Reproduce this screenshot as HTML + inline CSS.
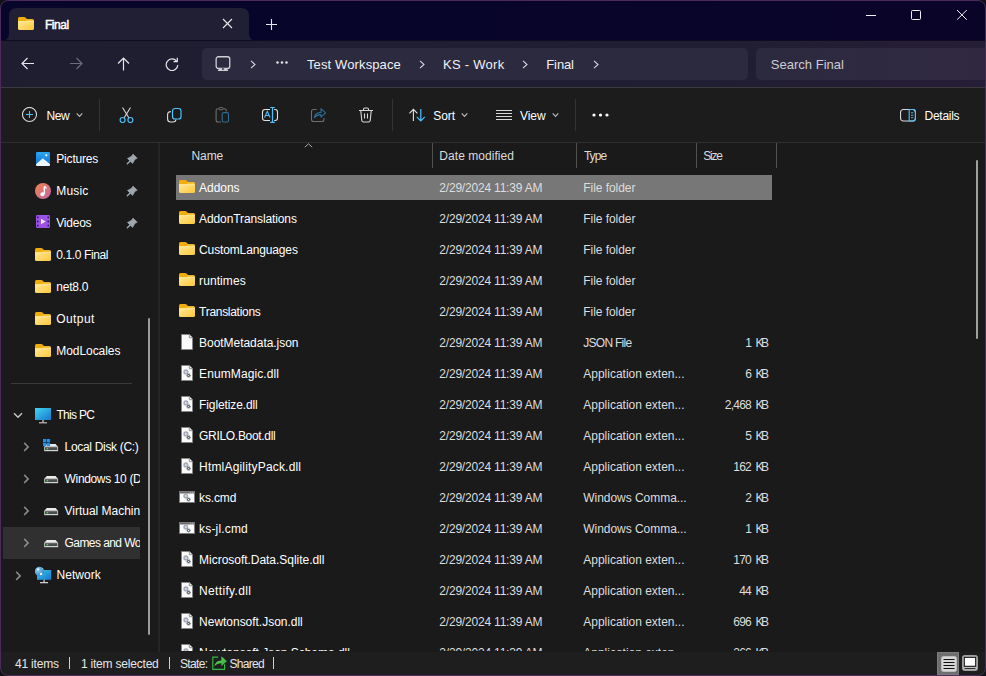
<!DOCTYPE html>
<html><head><meta charset="utf-8"><title>File Explorer</title>
<style>
*{margin:0;padding:0;box-sizing:border-box}
html,body{width:986px;height:676px;overflow:hidden;background:#121212;font-family:"Liberation Sans",sans-serif}
.win{position:absolute;left:0;top:0;width:986px;height:676px;border-radius:8px;overflow:hidden;background:#1a1a1a}
.brd{position:absolute;left:0;top:0;width:986px;height:676px;border-radius:8px;border:1px solid #4a2b5c;pointer-events:none}
.t{position:absolute;white-space:nowrap;line-height:1}
.r{position:absolute;display:block}
.clip{position:absolute;overflow:hidden}
</style></head><body>
<div class="win">
<div class="r" style="left:0px;top:0px;width:986px;height:41px;background:linear-gradient(90deg,#07052a 0%,#08042a 60%,#0b0429 100%);"></div>
<svg class="r" style="left:1px;top:8px;" width="262" height="33" viewBox="0 0 262 33"><path d="M0 33 Q8 33 8 25 V8 Q8 0 16 0 H240 Q248 0 248 8 V25 Q248 33 256 33 Z" fill="#201f33"/></svg>
<svg width="0" height="0" style="position:absolute"><defs><linearGradient id="fg" x1="0" y1="0" x2="1" y2="1"><stop offset="0" stop-color="#ffe896"/><stop offset="1" stop-color="#fcc83a"/></linearGradient></defs></svg>
<svg class="r" style="left:18px;top:17px;" width="16" height="13" viewBox="0 0 16 13"><path d="M0 1.6 Q0 0 1.6 0 H6 Q6.9 0 7.5 0.6 L9.1 2.2 H14.4 Q16 2.2 16 3.8 V6 H0 Z" fill="#f2ae08"/><path d="M8.3 2.2 H14.4 Q16 2.2 16 3.8 V6 H7.4 Z" fill="#f8c236"/><path d="M0 4.2 H16 V11.4 Q16 13 14.4 13 H1.6 Q0 13 0 11.4 Z" fill="url(#fg)"/><rect x="0.4" y="4.2" width="15.2" height="0.9" fill="#fff6c4" opacity="0.55"/></svg>
<div class="t" style="left:44.90px;top:18.84px;font-size:12px;color:#ffffff;font-weight:400;-webkit-text-stroke:0.45px #ffffff;letter-spacing:-0.428px;">Final</div>
<svg class="r" style="left:222px;top:18px;" width="11" height="11" viewBox="0 0 11 11"><path d="M1 1 L10 10 M10 1 L1 10" stroke="#e8e8ec" stroke-width="1.1"/></svg>
<svg class="r" style="left:266px;top:19px;" width="11" height="11" viewBox="0 0 11 11"><path d="M5.5 0 V11 M0 5.5 H11" stroke="#e8e8ec" stroke-width="1.1"/></svg>
<div class="r" style="left:866px;top:15px;width:10px;height:1px;background:#f0f0f0;"></div>
<svg class="r" style="left:911px;top:10px;" width="11" height="11" viewBox="0 0 11 11"><rect x="0.5" y="0.5" width="9" height="9" rx="1" fill="none" stroke="#f0f0f0" stroke-width="1"/></svg>
<svg class="r" style="left:957px;top:10px;" width="11" height="11" viewBox="0 0 11 11"><path d="M0 0 L9.8 9.8 M9.8 0 L0 9.8" stroke="#f0f0f0" stroke-width="1"/></svg>
<div class="r" style="left:0px;top:40px;width:986px;height:1px;background:#0f0c22;"></div>
<div class="r" style="left:0px;top:41px;width:986px;height:47px;background:linear-gradient(90deg,#1f1e31 0%,#201e32 70%,#261d36 100%);"></div>
<svg class="r" style="left:21px;top:57px;" width="14" height="13" viewBox="0 0 14 13"><path d="M13 6.5 H1 M6.5 1 L1 6.5 L6.5 12" stroke="#e6e6ea" stroke-width="1.2" fill="none"/></svg>
<svg class="r" style="left:69px;top:57px;" width="14" height="13" viewBox="0 0 14 13"><path d="M1 6.5 H13 M7.5 1 L13 6.5 L7.5 12" stroke="#6c6b78" stroke-width="1.2" fill="none"/></svg>
<svg class="r" style="left:117px;top:57px;" width="13" height="14" viewBox="0 0 13 14"><path d="M6.5 13.5 V1 M1 6.5 L6.5 1 L12 6.5" stroke="#e6e6ea" stroke-width="1.2" fill="none"/></svg>
<svg class="r" style="left:165px;top:57px;" width="14" height="14" viewBox="0 0 14 14"><path d="M11.6 4.2 A5.8 5.8 0 1 0 12.8 8" stroke="#e6e6ea" stroke-width="1.2" fill="none"/><path d="M12.3 0.8 V4.6 H8.5" stroke="#e6e6ea" stroke-width="1.2" fill="none"/></svg>
<div class="r" style="left:202px;top:48px;width:546px;height:32px;background:#2b2a3e;border-radius:5px"></div>
<svg class="r" style="left:215px;top:56px;" width="16" height="16" viewBox="0 0 16 16"><rect x="1.15" y="0.75" width="13.6" height="11.6" rx="2.2" fill="none" stroke="#cfcfd6" stroke-width="1.3"/><path d="M2.8 15 H13.2 L12.2 12.6 H3.8 Z" fill="#cfcfd6"/><rect x="6.9" y="12.4" width="2.2" height="1.3" fill="#2b2a3e"/></svg>
<svg class="r" style="left:250px;top:60px;" width="6" height="9" viewBox="0 0 6 9"><path d="M1 0.8 L5 4.5 L1 8.2" stroke="#d6d6dc" stroke-width="1.1" fill="none"/></svg>
<svg class="r" style="left:276px;top:61px;" width="12" height="3" viewBox="0 0 12 3"><circle cx="1.5" cy="1.5" r="1.3" fill="#e0e0e6"/><circle cx="6" cy="1.5" r="1.3" fill="#e0e0e6"/><circle cx="10.5" cy="1.5" r="1.3" fill="#e0e0e6"/></svg>
<div class="t" style="left:307.00px;top:57.50px;font-size:13px;color:#f0f0f4;font-weight:400;letter-spacing:0.120px;">Test Workspace</div>
<svg class="r" style="left:419px;top:60px;" width="6" height="9" viewBox="0 0 6 9"><path d="M1 0.8 L5 4.5 L1 8.2" stroke="#d6d6dc" stroke-width="1.1" fill="none"/></svg>
<div class="t" style="left:443.00px;top:57.50px;font-size:13px;color:#f0f0f4;font-weight:400;letter-spacing:0.274px;">KS - Work</div>
<svg class="r" style="left:522px;top:60px;" width="6" height="9" viewBox="0 0 6 9"><path d="M1 0.8 L5 4.5 L1 8.2" stroke="#d6d6dc" stroke-width="1.1" fill="none"/></svg>
<div class="t" style="left:546.30px;top:57.50px;font-size:13px;color:#f0f0f4;font-weight:400;letter-spacing:-0.119px;">Final</div>
<svg class="r" style="left:593px;top:60px;" width="6" height="9" viewBox="0 0 6 9"><path d="M1 0.8 L5 4.5 L1 8.2" stroke="#d6d6dc" stroke-width="1.1" fill="none"/></svg>
<div class="r" style="left:756px;top:48px;width:230px;height:32px;background:linear-gradient(90deg,#2c2a3f,#302841);border-radius:5px 0 0 5px"></div>
<div class="t" style="left:770.80px;top:58.00px;font-size:13px;color:#cdccd4;font-weight:400;letter-spacing:0.011px;">Search Final</div>
<div class="r" style="left:0px;top:87px;width:986px;height:1px;background:#3b3b3f;"></div>
<div class="r" style="left:0px;top:88px;width:986px;height:54px;background:#1c1c1c;"></div>
<div class="r" style="left:0px;top:142px;width:986px;height:1px;background:#2f2f2f;"></div>
<svg class="r" style="left:22px;top:107px;" width="16" height="16" viewBox="0 0 16 16"><circle cx="7.5" cy="7.5" r="7.05" fill="none" stroke="#d8d8d8" stroke-width="1.1"/><path d="M7.5 4 V11 M4 7.5 H11" stroke="#4cc2ff" stroke-width="1.1"/></svg>
<div class="t" style="left:46.60px;top:109.84px;font-size:12px;color:#ffffff;font-weight:400;letter-spacing:-0.470px;">New</div>
<svg class="r" style="left:76px;top:112px;" width="7" height="6" viewBox="0 0 7 6"><path d="M0.7 1.4 L3.5 4.3 L6.3 1.4" stroke="#b8b8b8" stroke-width="1.2" fill="none"/></svg>
<div class="r" style="left:99px;top:99px;width:1px;height:32px;background:#333333;"></div>
<svg class="r" style="left:119px;top:107px;" width="15" height="16" viewBox="0 0 15 16"><path d="M3.5 0.5 L10 11 M11.5 0.5 L5 11" stroke="#d8d8d8" stroke-width="1.1" fill="none"/><circle cx="3.6" cy="13" r="2.5" fill="none" stroke="#4cc2ff" stroke-width="1.2"/><circle cx="11.4" cy="13" r="2.5" fill="none" stroke="#4cc2ff" stroke-width="1.2"/></svg>
<svg class="r" style="left:166px;top:107px;" width="16" height="16" viewBox="0 0 16 16"><path d="M4.8 4.6 Q1.6 4.6 1.6 7.6 V12 Q1.6 15 4.6 15 H7 Q9.9 15 9.9 12.6" stroke="#e0e0e0" stroke-width="1.1" fill="none"/><rect x="6.5" y="1.5" width="8.5" height="10.5" rx="2.6" fill="none" stroke="#4cc2ff" stroke-width="1.2"/></svg>
<svg class="r" style="left:215px;top:107px;" width="15" height="16" viewBox="0 0 15 16"><path d="M6 15 H3 Q1.1 15 1.1 13 V3.6 Q1.1 1.7 3 1.7 H3.8 M8.3 1.7 H9.3 Q11.3 1.7 11.3 3.7 V4.4" stroke="#6e6e6e" stroke-width="1.1" fill="none"/><rect x="3.8" y="0.6" width="4.4" height="2.2" rx="1.1" fill="none" stroke="#6e6e6e" stroke-width="1"/><rect x="7.2" y="5.6" width="6.3" height="9.4" rx="1.5" fill="none" stroke="#2d6e96" stroke-width="1.1"/></svg>
<svg class="r" style="left:261px;top:106px;" width="18" height="17" viewBox="0 0 18 17"><path d="M9 3.5 H4 Q1.5 3.5 1.5 6 V12 Q1.5 14.5 4 14.5 H9 M13.2 3.5 H14 Q16.5 3.5 16.5 6 V12 Q16.5 14.5 14 14.5 H13.2" stroke="#e0e0e0" stroke-width="1.1" fill="none"/><path d="M11.5 1.5 V16.3 M9.2 1.5 H13.8 M9.2 16.3 H13.8" stroke="#4cc2ff" stroke-width="1.2"/><path d="M3.5 11.6 L6.3 5.3 L9.1 11.6 M4.5 9.5 H8.1" stroke="#4cc2ff" stroke-width="1.1" fill="none"/></svg>
<svg class="r" style="left:310px;top:107px;" width="17" height="16" viewBox="0 0 17 16"><path d="M6.5 2.5 H3.5 Q1.5 2.5 1.5 4.5 V12.5 Q1.5 14.5 3.5 14.5 H12 Q14 14.5 14 12.5 V11" stroke="#6e6e6e" stroke-width="1.1" fill="none"/><path d="M4.3 10.6 Q5.2 5.6 11 5.4 V1.6 L15.6 5.9 L11 10.2 V7.6 Q7 7.4 4.3 10.6 Z" stroke="#2d6e96" stroke-width="1.1" fill="none" stroke-linejoin="round"/></svg>
<svg class="r" style="left:358px;top:107px;" width="16" height="16" viewBox="0 0 16 16"><path d="M1 3.5 H15 M5.5 3.3 V2.3 Q5.5 1 6.8 1 H9.2 Q10.5 1 10.5 2.3 V3.3" stroke="#d8d8d8" stroke-width="1.1" fill="none"/><path d="M2.8 3.8 L3.8 13.5 Q4 15 5.5 15 H10.5 Q12 15 12.2 13.5 L13.2 3.8" stroke="#d8d8d8" stroke-width="1.1" fill="none"/><path d="M6.5 6.5 V11.5 M9.5 6.5 V11.5" stroke="#d8d8d8" stroke-width="1.1"/></svg>
<div class="r" style="left:392px;top:99px;width:1px;height:32px;background:#333333;"></div>
<svg class="r" style="left:408px;top:108px;" width="18" height="14" viewBox="0 0 18 14"><path d="M5.4 13 V1.3 M1.4 5.3 L5.4 1.3 L9.4 5.3" stroke="#e0e0e0" stroke-width="1.1" fill="none"/><path d="M12.8 1 V12.8 M8.8 8.8 L12.8 12.8 L16.8 8.8" stroke="#4cc2ff" stroke-width="1.2" fill="none"/></svg>
<div class="t" style="left:433.20px;top:109.84px;font-size:12px;color:#ffffff;font-weight:400;letter-spacing:-0.037px;">Sort</div>
<svg class="r" style="left:461px;top:112px;" width="7" height="6" viewBox="0 0 7 6"><path d="M0.7 1.4 L3.5 4.3 L6.3 1.4" stroke="#b8b8b8" stroke-width="1.2" fill="none"/></svg>
<div class="r" style="left:496px;top:110px;width:16px;height:1px;background:#d8d8d8;"></div>
<div class="r" style="left:496px;top:113px;width:16px;height:1px;background:#d8d8d8;"></div>
<div class="r" style="left:496px;top:116px;width:16px;height:1px;background:#d8d8d8;"></div>
<div class="r" style="left:496px;top:119px;width:16px;height:1px;background:#d8d8d8;"></div>
<div class="t" style="left:520.00px;top:109.84px;font-size:12px;color:#ffffff;font-weight:400;letter-spacing:-0.043px;">View</div>
<svg class="r" style="left:552px;top:112px;" width="7" height="6" viewBox="0 0 7 6"><path d="M0.7 1.4 L3.5 4.3 L6.3 1.4" stroke="#b8b8b8" stroke-width="1.2" fill="none"/></svg>
<div class="r" style="left:575px;top:99px;width:1px;height:32px;background:#333333;"></div>
<svg class="r" style="left:592px;top:113px;" width="17" height="4" viewBox="0 0 17 4"><circle cx="2" cy="2" r="1.6" fill="#ffffff"/><circle cx="8.5" cy="2" r="1.6" fill="#ffffff"/><circle cx="15" cy="2" r="1.6" fill="#ffffff"/></svg>
<svg class="r" style="left:899px;top:108px;" width="18" height="15" viewBox="0 0 18 15"><rect x="1.55" y="1.55" width="14.9" height="11.4" rx="2.8" fill="none" stroke="#d8d8d8" stroke-width="1.1"/><path d="M10.2 1.55 H13.6 Q16.45 1.55 16.45 4.4 V10.1 Q16.45 12.95 13.6 12.95 H10.2 Z" fill="none" stroke="#4cc2ff" stroke-width="1.1"/><path d="M12 4.8 H14.4 M12 7.25 H14.4 M12 9.7 H14.4" stroke="#4cc2ff" stroke-width="0.9"/></svg>
<div class="t" style="left:924.60px;top:109.84px;font-size:12px;color:#ffffff;font-weight:400;letter-spacing:-0.280px;">Details</div>
<div class="r" style="left:0px;top:143px;width:986px;height:509px;background:#1a1a1a;"></div>
<div class="r" style="left:158px;top:143px;width:2px;height:509px;background:#252525;"></div>
<svg class="r" style="left:36px;top:152px;" width="14" height="14" viewBox="0 0 14 14"><defs><linearGradient id="pg" x1="0" y1="0" x2="0" y2="1"><stop offset="0" stop-color="#2aa6f4"/><stop offset="1" stop-color="#0c6fd2"/></linearGradient></defs><rect x="0" y="0" width="14" height="14" rx="1.3" fill="url(#pg)"/><path d="M0 12.2 L6.8 6.2 L14 12.2 V12.7 Q14 14 12.7 14 H1.3 Q0 14 0 12.7 Z" fill="#eef7ff"/><circle cx="10.3" cy="3.3" r="1.1" fill="#ffffff"/></svg>
<div class="t" style="left:56.30px;top:152.84px;font-size:12px;color:#ffffff;font-weight:400;letter-spacing:-0.193px;">Pictures</div>
<svg class="r" style="left:126px;top:153px;" width="12" height="12" viewBox="0 0 12 12"><path d="M7 1 L11.3 5.2 L8.9 6.5 L6.6 10.6 L1.4 5.4 L5.5 3.2 Z" fill="#a0a7ae" stroke="#a0a7ae" stroke-width="0.5" stroke-linejoin="round"/><path d="M4.2 7.9 L1.3 10.8" stroke="#a0a7ae" stroke-width="1.4" stroke-linecap="round"/></svg>
<svg class="r" style="left:35px;top:183px;" width="16" height="16" viewBox="0 0 16 16"><defs><linearGradient id="mg" x1="0" y1="0" x2="1" y2="1"><stop offset="0" stop-color="#f0844a"/><stop offset="1" stop-color="#c266a8"/></linearGradient></defs><circle cx="8" cy="8" r="8" fill="url(#mg)"/><path d="M9.3 3.5 V11" stroke="#fff" stroke-width="1.4"/><path d="M9.3 3.4 Q11 3.8 11.3 5.6" stroke="#fff" stroke-width="1.3" fill="none"/><circle cx="7.4" cy="11.3" r="2" fill="#fff"/></svg>
<div class="t" style="left:56.30px;top:184.84px;font-size:12px;color:#ffffff;font-weight:400;letter-spacing:0.140px;">Music</div>
<svg class="r" style="left:126px;top:185px;" width="12" height="12" viewBox="0 0 12 12"><path d="M7 1 L11.3 5.2 L8.9 6.5 L6.6 10.6 L1.4 5.4 L5.5 3.2 Z" fill="#a0a7ae" stroke="#a0a7ae" stroke-width="0.5" stroke-linejoin="round"/><path d="M4.2 7.9 L1.3 10.8" stroke="#a0a7ae" stroke-width="1.4" stroke-linecap="round"/></svg>
<svg class="r" style="left:36px;top:215px;" width="14" height="13" viewBox="0 0 14 13"><rect x="0" y="0" width="14" height="13" rx="1.3" fill="#9b52e6"/><path d="M5 3.8 L9.6 6.5 L5 9.2 Z" fill="#f4eaff"/><g fill="#2e1158"><rect x="1" y="1.6" width="1.5" height="1.6"/><rect x="1" y="5.7" width="1.5" height="1.6"/><rect x="1" y="9.8" width="1.5" height="1.6"/><rect x="11.5" y="1.6" width="1.5" height="1.6"/><rect x="11.5" y="5.7" width="1.5" height="1.6"/><rect x="11.5" y="9.8" width="1.5" height="1.6"/></g></svg>
<div class="t" style="left:56.30px;top:216.84px;font-size:12px;color:#ffffff;font-weight:400;letter-spacing:-0.236px;">Videos</div>
<svg class="r" style="left:126px;top:217px;" width="12" height="12" viewBox="0 0 12 12"><path d="M7 1 L11.3 5.2 L8.9 6.5 L6.6 10.6 L1.4 5.4 L5.5 3.2 Z" fill="#a0a7ae" stroke="#a0a7ae" stroke-width="0.5" stroke-linejoin="round"/><path d="M4.2 7.9 L1.3 10.8" stroke="#a0a7ae" stroke-width="1.4" stroke-linecap="round"/></svg>
<svg class="r" style="left:35px;top:248px;" width="16" height="13" viewBox="0 0 16 13"><path d="M0 1.6 Q0 0 1.6 0 H6 Q6.9 0 7.5 0.6 L9.1 2.2 H14.4 Q16 2.2 16 3.8 V6 H0 Z" fill="#f2ae08"/><path d="M8.3 2.2 H14.4 Q16 2.2 16 3.8 V6 H7.4 Z" fill="#f8c236"/><path d="M0 4.2 H16 V11.4 Q16 13 14.4 13 H1.6 Q0 13 0 11.4 Z" fill="url(#fg)"/><rect x="0.4" y="4.2" width="15.2" height="0.9" fill="#fff6c4" opacity="0.55"/></svg>
<div class="t" style="left:56.30px;top:248.84px;font-size:12px;color:#ffffff;font-weight:400;letter-spacing:-0.393px;">0.1.0 Final</div>
<svg class="r" style="left:35px;top:280px;" width="16" height="13" viewBox="0 0 16 13"><path d="M0 1.6 Q0 0 1.6 0 H6 Q6.9 0 7.5 0.6 L9.1 2.2 H14.4 Q16 2.2 16 3.8 V6 H0 Z" fill="#f2ae08"/><path d="M8.3 2.2 H14.4 Q16 2.2 16 3.8 V6 H7.4 Z" fill="#f8c236"/><path d="M0 4.2 H16 V11.4 Q16 13 14.4 13 H1.6 Q0 13 0 11.4 Z" fill="url(#fg)"/><rect x="0.4" y="4.2" width="15.2" height="0.9" fill="#fff6c4" opacity="0.55"/></svg>
<div class="t" style="left:56.30px;top:280.84px;font-size:12px;color:#ffffff;font-weight:400;letter-spacing:-0.252px;">net8.0</div>
<svg class="r" style="left:35px;top:312px;" width="16" height="13" viewBox="0 0 16 13"><path d="M0 1.6 Q0 0 1.6 0 H6 Q6.9 0 7.5 0.6 L9.1 2.2 H14.4 Q16 2.2 16 3.8 V6 H0 Z" fill="#f2ae08"/><path d="M8.3 2.2 H14.4 Q16 2.2 16 3.8 V6 H7.4 Z" fill="#f8c236"/><path d="M0 4.2 H16 V11.4 Q16 13 14.4 13 H1.6 Q0 13 0 11.4 Z" fill="url(#fg)"/><rect x="0.4" y="4.2" width="15.2" height="0.9" fill="#fff6c4" opacity="0.55"/></svg>
<div class="t" style="left:56.30px;top:312.84px;font-size:12px;color:#ffffff;font-weight:400;letter-spacing:0.396px;">Output</div>
<svg class="r" style="left:35px;top:344px;" width="16" height="13" viewBox="0 0 16 13"><path d="M0 1.6 Q0 0 1.6 0 H6 Q6.9 0 7.5 0.6 L9.1 2.2 H14.4 Q16 2.2 16 3.8 V6 H0 Z" fill="#f2ae08"/><path d="M8.3 2.2 H14.4 Q16 2.2 16 3.8 V6 H7.4 Z" fill="#f8c236"/><path d="M0 4.2 H16 V11.4 Q16 13 14.4 13 H1.6 Q0 13 0 11.4 Z" fill="url(#fg)"/><rect x="0.4" y="4.2" width="15.2" height="0.9" fill="#fff6c4" opacity="0.55"/></svg>
<div class="t" style="left:56.30px;top:344.84px;font-size:12px;color:#ffffff;font-weight:400;letter-spacing:-0.068px;">ModLocales</div>
<div class="r" style="left:11px;top:383px;width:121px;height:1px;background:#3a3a3a;"></div>
<div class="r" style="left:3px;top:527px;width:137px;height:32px;background:#303030;"></div>
<svg class="r" style="left:12.5px;top:411.5px;" width="10" height="7" viewBox="0 0 10 7"><path d="M1 1.2 L5 5.2 L9 1.2" stroke="#c4c4c4" stroke-width="1.5" fill="none"/></svg>
<svg class="r" style="left:35px;top:408px;" width="16" height="16" viewBox="0 0 16 16"><defs><linearGradient id="pcg" x1="0" y1="0" x2="1" y2="1"><stop offset="0" stop-color="#42d4f2"/><stop offset="1" stop-color="#1778cc"/></linearGradient></defs><rect x="0" y="0" width="16" height="12" fill="url(#pcg)"/><path d="M8 12 V14.3" stroke="#bdbdbd" stroke-width="1.4"/><path d="M4 14.8 H12" stroke="#cfcfcf" stroke-width="1.1"/></svg>
<div class="t" style="left:56.50px;top:408.84px;font-size:12px;color:#ffffff;font-weight:400;letter-spacing:-0.712px;">This PC</div>
<svg class="r" style="left:22.5px;top:442px;" width="7" height="10" viewBox="0 0 7 10"><path d="M1.2 0.9 L5.2 4.9 L1.2 8.9" stroke="#8c8c8c" stroke-width="1.5" fill="none"/></svg>
<svg class="r" style="left:43px;top:439px;" width="16" height="13" viewBox="0 0 16 13"><path d="M3.8 5 H12.6 L15 7.7 H1.3 Z" fill="#ebebeb"/><rect x="1.2" y="7.6" width="13.9" height="4.6" fill="#d2d2d2"/><rect x="2" y="8.2" width="12.3" height="2.8" fill="#4c4c4c"/><circle cx="4.4" cy="9.6" r="0.95" fill="#38e04c"/><g fill="#1e90ee"><rect x="0" y="0" width="3.3" height="3.3"/><rect x="3.8" y="0" width="3.3" height="3.3"/><rect x="0" y="3.8" width="3.3" height="3.3"/><rect x="3.8" y="3.8" width="3.3" height="3.3"/></g></svg>
<div class="clip" style="left:64px;top:436px;width:76px;height:20px">
<div class="t" style="left:0.60px;top:4.84px;font-size:12px;color:#ffffff;font-weight:400;letter-spacing:-0.320px;">Local Disk (C:)</div>
</div>
<svg class="r" style="left:22.5px;top:474px;" width="7" height="10" viewBox="0 0 7 10"><path d="M1.2 0.9 L5.2 4.9 L1.2 8.9" stroke="#8c8c8c" stroke-width="1.5" fill="none"/></svg>
<svg class="r" style="left:43px;top:471px;" width="16" height="13" viewBox="0 0 16 13"><path d="M3.8 5 H12.6 L15 7.7 H1.3 Z" fill="#ebebeb"/><rect x="1.2" y="7.6" width="13.9" height="4.6" fill="#d2d2d2"/><rect x="2" y="8.2" width="12.3" height="2.8" fill="#4c4c4c"/><circle cx="4.4" cy="9.6" r="0.95" fill="#38e04c"/></svg>
<div class="clip" style="left:64px;top:468px;width:76px;height:20px">
<div class="t" style="left:0.60px;top:4.84px;font-size:12px;color:#ffffff;font-weight:400;letter-spacing:-0.354px;">Windows 10 (D:)</div>
</div>
<svg class="r" style="left:22.5px;top:506px;" width="7" height="10" viewBox="0 0 7 10"><path d="M1.2 0.9 L5.2 4.9 L1.2 8.9" stroke="#8c8c8c" stroke-width="1.5" fill="none"/></svg>
<svg class="r" style="left:43px;top:503px;" width="16" height="13" viewBox="0 0 16 13"><path d="M3.8 5 H12.6 L15 7.7 H1.3 Z" fill="#ebebeb"/><rect x="1.2" y="7.6" width="13.9" height="4.6" fill="#d2d2d2"/><rect x="2" y="8.2" width="12.3" height="2.8" fill="#4c4c4c"/><circle cx="4.4" cy="9.6" r="0.95" fill="#38e04c"/></svg>
<div class="clip" style="left:64px;top:500px;width:76px;height:20px">
<div class="t" style="left:0.60px;top:4.84px;font-size:12px;color:#ffffff;font-weight:400;letter-spacing:-0.017px;">Virtual Machines</div>
</div>
<svg class="r" style="left:22.5px;top:538px;" width="7" height="10" viewBox="0 0 7 10"><path d="M1.2 0.9 L5.2 4.9 L1.2 8.9" stroke="#8c8c8c" stroke-width="1.5" fill="none"/></svg>
<svg class="r" style="left:43px;top:535px;" width="16" height="13" viewBox="0 0 16 13"><path d="M3.8 5 H12.6 L15 7.7 H1.3 Z" fill="#ebebeb"/><rect x="1.2" y="7.6" width="13.9" height="4.6" fill="#d2d2d2"/><rect x="2" y="8.2" width="12.3" height="2.8" fill="#4c4c4c"/><circle cx="4.4" cy="9.6" r="0.95" fill="#38e04c"/></svg>
<div class="clip" style="left:64px;top:532px;width:76px;height:20px">
<div class="t" style="left:0.60px;top:4.84px;font-size:12px;color:#ffffff;font-weight:400;letter-spacing:-0.579px;">Games and Work</div>
</div>
<svg class="r" style="left:14.5px;top:570.5px;" width="7" height="10" viewBox="0 0 7 10"><path d="M1.2 0.9 L5.2 4.9 L1.2 8.9" stroke="#8c8c8c" stroke-width="1.5" fill="none"/></svg>
<svg class="r" style="left:35px;top:565px;" width="17" height="19" viewBox="0 0 17 19"><defs><linearGradient id="ng" x1="0" y1="0" x2="1" y2="1"><stop offset="0" stop-color="#38c8f0"/><stop offset="1" stop-color="#1776c8"/></linearGradient><radialGradient id="gg" cx="0.35" cy="0.35" r="0.7"><stop offset="0" stop-color="#8fd0f4"/><stop offset="1" stop-color="#2f86c4"/></radialGradient></defs><rect x="2" y="5" width="14.2" height="9.8" fill="url(#ng)"/><path d="M9.1 14.8 V17" stroke="#bdbdbd" stroke-width="1.4"/><path d="M5 17.6 H13" stroke="#cfcfcf" stroke-width="1.1"/><circle cx="4.4" cy="6.4" r="4.6" fill="url(#gg)"/><path d="M2 3.6 Q3.6 2.6 4.6 4.2 Q3.6 5.8 2.2 5.2 Z M5.2 8 Q7 7.2 7.6 9.2 Q6.4 10.6 5 10 Z M6.6 2.6 Q8.4 3.2 8.8 5 Q7.6 4.6 6.6 2.6 Z" fill="#e8f4fb"/></svg>
<div class="t" style="left:56.50px;top:568.84px;font-size:12px;color:#ffffff;font-weight:400;letter-spacing:0.045px;">Network</div>
<div class="r" style="left:148px;top:318px;width:2px;height:317px;background:#9b9b9b;border-radius:1px"></div>
<div class="t" style="left:191.60px;top:149.84px;font-size:12px;color:#dcdcdc;font-weight:400;letter-spacing:-0.137px;">Name</div>
<svg class="r" style="left:304px;top:143px;" width="9" height="5" viewBox="0 0 9 5"><path d="M0.8 4.2 L4.5 0.8 L8.2 4.2" stroke="#aaaaaa" stroke-width="1" fill="none"/></svg>
<div class="r" style="left:432px;top:143px;width:1px;height:25px;background:#505050;"></div>
<div class="r" style="left:576px;top:143px;width:1px;height:25px;background:#505050;"></div>
<div class="r" style="left:696px;top:143px;width:1px;height:25px;background:#505050;"></div>
<div class="r" style="left:776px;top:143px;width:1px;height:25px;background:#505050;"></div>
<div class="t" style="left:439.30px;top:149.84px;font-size:12px;color:#dcdcdc;font-weight:400;letter-spacing:0.055px;">Date modified</div>
<div class="t" style="left:583.90px;top:149.84px;font-size:12px;color:#dcdcdc;font-weight:400;letter-spacing:-0.940px;">Type</div>
<div class="t" style="left:703.20px;top:149.84px;font-size:12px;color:#dcdcdc;font-weight:400;letter-spacing:-1.180px;">Size</div>
<div class="r" style="left:976px;top:160px;width:2px;height:179px;background:#a0a0a0;border-radius:1px"></div>
<div class="clip" style="left:160px;top:168px;width:826px;height:483px">
<div class="r" style="left:16px;top:7px;width:596px;height:25px;background:#777777;"></div>
<svg class="r" style="left:19px;top:12px;" width="16" height="13" viewBox="0 0 16 13"><path d="M0 1.6 Q0 0 1.6 0 H6 Q6.9 0 7.5 0.6 L9.1 2.2 H14.4 Q16 2.2 16 3.8 V6 H0 Z" fill="#f2ae08"/><path d="M8.3 2.2 H14.4 Q16 2.2 16 3.8 V6 H7.4 Z" fill="#f8c236"/><path d="M0 4.2 H16 V11.4 Q16 13 14.4 13 H1.6 Q0 13 0 11.4 Z" fill="url(#fg)"/><rect x="0.4" y="4.2" width="15.2" height="0.9" fill="#fff6c4" opacity="0.55"/></svg>
<div class="t" style="left:39.10px;top:13.84px;font-size:12px;color:#ffffff;font-weight:400;letter-spacing:-0.060px;">Addons</div>
<div class="t" style="left:279.30px;top:13.84px;font-size:12px;color:#dddddd;font-weight:400;letter-spacing:-0.196px;">2/29/2024 11:39 AM</div>
<div class="t" style="left:423.30px;top:13.84px;font-size:12px;color:#dddddd;font-weight:400;letter-spacing:-0.059px;">File folder</div>
<svg class="r" style="left:19px;top:43px;" width="16" height="13" viewBox="0 0 16 13"><path d="M0 1.6 Q0 0 1.6 0 H6 Q6.9 0 7.5 0.6 L9.1 2.2 H14.4 Q16 2.2 16 3.8 V6 H0 Z" fill="#f2ae08"/><path d="M8.3 2.2 H14.4 Q16 2.2 16 3.8 V6 H7.4 Z" fill="#f8c236"/><path d="M0 4.2 H16 V11.4 Q16 13 14.4 13 H1.6 Q0 13 0 11.4 Z" fill="url(#fg)"/><rect x="0.4" y="4.2" width="15.2" height="0.9" fill="#fff6c4" opacity="0.55"/></svg>
<div class="t" style="left:39.10px;top:44.84px;font-size:12px;color:#ffffff;font-weight:400;letter-spacing:-0.114px;">AddonTranslations</div>
<div class="t" style="left:279.30px;top:44.84px;font-size:12px;color:#dddddd;font-weight:400;letter-spacing:-0.196px;">2/29/2024 11:39 AM</div>
<div class="t" style="left:423.30px;top:44.84px;font-size:12px;color:#dddddd;font-weight:400;letter-spacing:-0.059px;">File folder</div>
<svg class="r" style="left:19px;top:74px;" width="16" height="13" viewBox="0 0 16 13"><path d="M0 1.6 Q0 0 1.6 0 H6 Q6.9 0 7.5 0.6 L9.1 2.2 H14.4 Q16 2.2 16 3.8 V6 H0 Z" fill="#f2ae08"/><path d="M8.3 2.2 H14.4 Q16 2.2 16 3.8 V6 H7.4 Z" fill="#f8c236"/><path d="M0 4.2 H16 V11.4 Q16 13 14.4 13 H1.6 Q0 13 0 11.4 Z" fill="url(#fg)"/><rect x="0.4" y="4.2" width="15.2" height="0.9" fill="#fff6c4" opacity="0.55"/></svg>
<div class="t" style="left:39.10px;top:75.84px;font-size:12px;color:#ffffff;font-weight:400;letter-spacing:-0.139px;">CustomLanguages</div>
<div class="t" style="left:279.30px;top:75.84px;font-size:12px;color:#dddddd;font-weight:400;letter-spacing:-0.196px;">2/29/2024 11:39 AM</div>
<div class="t" style="left:423.30px;top:75.84px;font-size:12px;color:#dddddd;font-weight:400;letter-spacing:-0.059px;">File folder</div>
<svg class="r" style="left:19px;top:105px;" width="16" height="13" viewBox="0 0 16 13"><path d="M0 1.6 Q0 0 1.6 0 H6 Q6.9 0 7.5 0.6 L9.1 2.2 H14.4 Q16 2.2 16 3.8 V6 H0 Z" fill="#f2ae08"/><path d="M8.3 2.2 H14.4 Q16 2.2 16 3.8 V6 H7.4 Z" fill="#f8c236"/><path d="M0 4.2 H16 V11.4 Q16 13 14.4 13 H1.6 Q0 13 0 11.4 Z" fill="url(#fg)"/><rect x="0.4" y="4.2" width="15.2" height="0.9" fill="#fff6c4" opacity="0.55"/></svg>
<div class="t" style="left:39.10px;top:106.84px;font-size:12px;color:#ffffff;font-weight:400;letter-spacing:0.084px;">runtimes</div>
<div class="t" style="left:279.30px;top:106.84px;font-size:12px;color:#dddddd;font-weight:400;letter-spacing:-0.196px;">2/29/2024 11:39 AM</div>
<div class="t" style="left:423.30px;top:106.84px;font-size:12px;color:#dddddd;font-weight:400;letter-spacing:-0.059px;">File folder</div>
<svg class="r" style="left:19px;top:136px;" width="16" height="13" viewBox="0 0 16 13"><path d="M0 1.6 Q0 0 1.6 0 H6 Q6.9 0 7.5 0.6 L9.1 2.2 H14.4 Q16 2.2 16 3.8 V6 H0 Z" fill="#f2ae08"/><path d="M8.3 2.2 H14.4 Q16 2.2 16 3.8 V6 H7.4 Z" fill="#f8c236"/><path d="M0 4.2 H16 V11.4 Q16 13 14.4 13 H1.6 Q0 13 0 11.4 Z" fill="url(#fg)"/><rect x="0.4" y="4.2" width="15.2" height="0.9" fill="#fff6c4" opacity="0.55"/></svg>
<div class="t" style="left:39.10px;top:137.84px;font-size:12px;color:#ffffff;font-weight:400;letter-spacing:-0.293px;">Translations</div>
<div class="t" style="left:279.30px;top:137.84px;font-size:12px;color:#dddddd;font-weight:400;letter-spacing:-0.196px;">2/29/2024 11:39 AM</div>
<div class="t" style="left:423.30px;top:137.84px;font-size:12px;color:#dddddd;font-weight:400;letter-spacing:-0.059px;">File folder</div>
<svg class="r" style="left:21px;top:166px;" width="12" height="16" viewBox="0 0 12 16"><path d="M0.5 0.5 H8.3 L11.5 3.7 V15.5 H0.5 Z" fill="#fafafa" stroke="#858585" stroke-width="1"/><path d="M8.3 0.6 V3.7 H11.4" fill="#f2f2f2" stroke="#858585" stroke-width="0.9"/></svg>
<div class="t" style="left:39.10px;top:168.84px;font-size:12px;color:#ffffff;font-weight:400;letter-spacing:-0.042px;">BootMetadata.json</div>
<div class="t" style="left:279.30px;top:168.84px;font-size:12px;color:#dddddd;font-weight:400;letter-spacing:-0.196px;">2/29/2024 11:39 AM</div>
<div class="t" style="left:423.30px;top:168.84px;font-size:12px;color:#dddddd;font-weight:400;letter-spacing:-0.734px;">JSON File</div>
<div class="t" style="left:595.60px;top:168.84px;font-size:12px;color:#dddddd;font-weight:400;letter-spacing:-2.510px;">KB</div>
<div class="t" style="left:585.13px;top:168.84px;font-size:12px;color:#dddddd;font-weight:400;">1</div>
<svg class="r" style="left:21px;top:197px;" width="12" height="16" viewBox="0 0 12 16"><path d="M0.5 0.5 H8.3 L11.5 3.7 V15.5 H0.5 Z" fill="#fafafa" stroke="#858585" stroke-width="1"/><path d="M8.3 0.6 V3.7 H11.4" fill="#f2f2f2" stroke="#858585" stroke-width="0.9"/><circle cx="4.9" cy="6.9" r="2.6" fill="#a3acb8"/><circle cx="4.9" cy="6.9" r="1" fill="#dfe3e8"/><circle cx="7.6" cy="10.5" r="1.75" fill="none" stroke="#505963" stroke-width="1" stroke-dasharray="0.9 0.65"/><circle cx="7.6" cy="10.5" r="1.4" fill="#505963"/><circle cx="7.6" cy="10.5" r="0.6" fill="#ffffff"/></svg>
<div class="t" style="left:39.10px;top:199.84px;font-size:12px;color:#ffffff;font-weight:400;letter-spacing:0.092px;">EnumMagic.dll</div>
<div class="t" style="left:279.30px;top:199.84px;font-size:12px;color:#dddddd;font-weight:400;letter-spacing:-0.196px;">2/29/2024 11:39 AM</div>
<div class="t" style="left:423.30px;top:199.84px;font-size:12px;color:#dddddd;font-weight:400;letter-spacing:-0.011px;">Application exten...</div>
<div class="t" style="left:595.60px;top:199.84px;font-size:12px;color:#dddddd;font-weight:400;letter-spacing:-2.510px;">KB</div>
<div class="t" style="left:585.13px;top:199.84px;font-size:12px;color:#dddddd;font-weight:400;">6</div>
<svg class="r" style="left:21px;top:228px;" width="12" height="16" viewBox="0 0 12 16"><path d="M0.5 0.5 H8.3 L11.5 3.7 V15.5 H0.5 Z" fill="#fafafa" stroke="#858585" stroke-width="1"/><path d="M8.3 0.6 V3.7 H11.4" fill="#f2f2f2" stroke="#858585" stroke-width="0.9"/><circle cx="4.9" cy="6.9" r="2.6" fill="#a3acb8"/><circle cx="4.9" cy="6.9" r="1" fill="#dfe3e8"/><circle cx="7.6" cy="10.5" r="1.75" fill="none" stroke="#505963" stroke-width="1" stroke-dasharray="0.9 0.65"/><circle cx="7.6" cy="10.5" r="1.4" fill="#505963"/><circle cx="7.6" cy="10.5" r="0.6" fill="#ffffff"/></svg>
<div class="t" style="left:39.10px;top:230.84px;font-size:12px;color:#ffffff;font-weight:400;letter-spacing:-0.118px;">Figletize.dll</div>
<div class="t" style="left:279.30px;top:230.84px;font-size:12px;color:#dddddd;font-weight:400;letter-spacing:-0.196px;">2/29/2024 11:39 AM</div>
<div class="t" style="left:423.30px;top:230.84px;font-size:12px;color:#dddddd;font-weight:400;letter-spacing:-0.011px;">Application exten...</div>
<div class="t" style="left:595.60px;top:230.84px;font-size:12px;color:#dddddd;font-weight:400;letter-spacing:-2.510px;">KB</div>
<div class="t" style="left:564.80px;top:230.84px;font-size:12px;color:#dddddd;font-weight:400;letter-spacing:-0.758px;">2,468</div>
<svg class="r" style="left:21px;top:259px;" width="12" height="16" viewBox="0 0 12 16"><path d="M0.5 0.5 H8.3 L11.5 3.7 V15.5 H0.5 Z" fill="#fafafa" stroke="#858585" stroke-width="1"/><path d="M8.3 0.6 V3.7 H11.4" fill="#f2f2f2" stroke="#858585" stroke-width="0.9"/><circle cx="4.9" cy="6.9" r="2.6" fill="#a3acb8"/><circle cx="4.9" cy="6.9" r="1" fill="#dfe3e8"/><circle cx="7.6" cy="10.5" r="1.75" fill="none" stroke="#505963" stroke-width="1" stroke-dasharray="0.9 0.65"/><circle cx="7.6" cy="10.5" r="1.4" fill="#505963"/><circle cx="7.6" cy="10.5" r="0.6" fill="#ffffff"/></svg>
<div class="t" style="left:39.10px;top:261.84px;font-size:12px;color:#ffffff;font-weight:400;letter-spacing:-0.315px;">GRILO.Boot.dll</div>
<div class="t" style="left:279.30px;top:261.84px;font-size:12px;color:#dddddd;font-weight:400;letter-spacing:-0.196px;">2/29/2024 11:39 AM</div>
<div class="t" style="left:423.30px;top:261.84px;font-size:12px;color:#dddddd;font-weight:400;letter-spacing:-0.011px;">Application exten...</div>
<div class="t" style="left:595.60px;top:261.84px;font-size:12px;color:#dddddd;font-weight:400;letter-spacing:-2.510px;">KB</div>
<div class="t" style="left:585.13px;top:261.84px;font-size:12px;color:#dddddd;font-weight:400;">5</div>
<svg class="r" style="left:21px;top:290px;" width="12" height="16" viewBox="0 0 12 16"><path d="M0.5 0.5 H8.3 L11.5 3.7 V15.5 H0.5 Z" fill="#fafafa" stroke="#858585" stroke-width="1"/><path d="M8.3 0.6 V3.7 H11.4" fill="#f2f2f2" stroke="#858585" stroke-width="0.9"/><circle cx="4.9" cy="6.9" r="2.6" fill="#a3acb8"/><circle cx="4.9" cy="6.9" r="1" fill="#dfe3e8"/><circle cx="7.6" cy="10.5" r="1.75" fill="none" stroke="#505963" stroke-width="1" stroke-dasharray="0.9 0.65"/><circle cx="7.6" cy="10.5" r="1.4" fill="#505963"/><circle cx="7.6" cy="10.5" r="0.6" fill="#ffffff"/></svg>
<div class="t" style="left:39.10px;top:292.84px;font-size:12px;color:#ffffff;font-weight:400;letter-spacing:0.178px;">HtmlAgilityPack.dll</div>
<div class="t" style="left:279.30px;top:292.84px;font-size:12px;color:#dddddd;font-weight:400;letter-spacing:-0.196px;">2/29/2024 11:39 AM</div>
<div class="t" style="left:423.30px;top:292.84px;font-size:12px;color:#dddddd;font-weight:400;letter-spacing:-0.011px;">Application exten...</div>
<div class="t" style="left:595.60px;top:292.84px;font-size:12px;color:#dddddd;font-weight:400;letter-spacing:-2.510px;">KB</div>
<div class="t" style="left:573.29px;top:292.84px;font-size:12px;color:#dddddd;font-weight:400;letter-spacing:-0.758px;">162</div>
<svg class="r" style="left:19px;top:323px;" width="16" height="12" viewBox="0 0 16 12"><rect x="0.5" y="0.5" width="15" height="11" fill="#fbfbfb" stroke="#7a7a7a" stroke-width="1"/><rect x="1" y="1" width="14" height="1.5" fill="#6c6c6c"/><rect x="11.3" y="1.3" width="0.9" height="0.9" fill="#d8d8d8"/><rect x="13.2" y="1.3" width="0.9" height="0.9" fill="#d8d8d8"/><circle cx="6.8" cy="4.9" r="2.5" fill="#a3acb8"/><circle cx="6.8" cy="4.9" r="1" fill="#dfe3e8"/><circle cx="9.5" cy="8.4" r="1.7" fill="none" stroke="#505963" stroke-width="1" stroke-dasharray="0.9 0.65"/><circle cx="9.5" cy="8.4" r="1.35" fill="#505963"/><circle cx="9.5" cy="8.4" r="0.6" fill="#ffffff"/></svg>
<div class="t" style="left:39.10px;top:323.84px;font-size:12px;color:#ffffff;font-weight:400;letter-spacing:-0.140px;">ks.cmd</div>
<div class="t" style="left:279.30px;top:323.84px;font-size:12px;color:#dddddd;font-weight:400;letter-spacing:-0.196px;">2/29/2024 11:39 AM</div>
<div class="t" style="left:423.30px;top:323.84px;font-size:12px;color:#dddddd;font-weight:400;letter-spacing:-0.041px;">Windows Comma...</div>
<div class="t" style="left:595.60px;top:323.84px;font-size:12px;color:#dddddd;font-weight:400;letter-spacing:-2.510px;">KB</div>
<div class="t" style="left:585.13px;top:323.84px;font-size:12px;color:#dddddd;font-weight:400;">2</div>
<svg class="r" style="left:19px;top:354px;" width="16" height="12" viewBox="0 0 16 12"><rect x="0.5" y="0.5" width="15" height="11" fill="#fbfbfb" stroke="#7a7a7a" stroke-width="1"/><rect x="1" y="1" width="14" height="1.5" fill="#6c6c6c"/><rect x="11.3" y="1.3" width="0.9" height="0.9" fill="#d8d8d8"/><rect x="13.2" y="1.3" width="0.9" height="0.9" fill="#d8d8d8"/><circle cx="6.8" cy="4.9" r="2.5" fill="#a3acb8"/><circle cx="6.8" cy="4.9" r="1" fill="#dfe3e8"/><circle cx="9.5" cy="8.4" r="1.7" fill="none" stroke="#505963" stroke-width="1" stroke-dasharray="0.9 0.65"/><circle cx="9.5" cy="8.4" r="1.35" fill="#505963"/><circle cx="9.5" cy="8.4" r="0.6" fill="#ffffff"/></svg>
<div class="t" style="left:39.10px;top:354.84px;font-size:12px;color:#ffffff;font-weight:400;letter-spacing:0.171px;">ks-jl.cmd</div>
<div class="t" style="left:279.30px;top:354.84px;font-size:12px;color:#dddddd;font-weight:400;letter-spacing:-0.196px;">2/29/2024 11:39 AM</div>
<div class="t" style="left:423.30px;top:354.84px;font-size:12px;color:#dddddd;font-weight:400;letter-spacing:-0.041px;">Windows Comma...</div>
<div class="t" style="left:595.60px;top:354.84px;font-size:12px;color:#dddddd;font-weight:400;letter-spacing:-2.510px;">KB</div>
<div class="t" style="left:585.13px;top:354.84px;font-size:12px;color:#dddddd;font-weight:400;">1</div>
<svg class="r" style="left:21px;top:383px;" width="12" height="16" viewBox="0 0 12 16"><path d="M0.5 0.5 H8.3 L11.5 3.7 V15.5 H0.5 Z" fill="#fafafa" stroke="#858585" stroke-width="1"/><path d="M8.3 0.6 V3.7 H11.4" fill="#f2f2f2" stroke="#858585" stroke-width="0.9"/><circle cx="4.9" cy="6.9" r="2.6" fill="#a3acb8"/><circle cx="4.9" cy="6.9" r="1" fill="#dfe3e8"/><circle cx="7.6" cy="10.5" r="1.75" fill="none" stroke="#505963" stroke-width="1" stroke-dasharray="0.9 0.65"/><circle cx="7.6" cy="10.5" r="1.4" fill="#505963"/><circle cx="7.6" cy="10.5" r="0.6" fill="#ffffff"/></svg>
<div class="t" style="left:39.10px;top:385.84px;font-size:12px;color:#ffffff;font-weight:400;letter-spacing:-0.031px;">Microsoft.Data.Sqlite.dll</div>
<div class="t" style="left:279.30px;top:385.84px;font-size:12px;color:#dddddd;font-weight:400;letter-spacing:-0.196px;">2/29/2024 11:39 AM</div>
<div class="t" style="left:423.30px;top:385.84px;font-size:12px;color:#dddddd;font-weight:400;letter-spacing:-0.011px;">Application exten...</div>
<div class="t" style="left:595.60px;top:385.84px;font-size:12px;color:#dddddd;font-weight:400;letter-spacing:-2.510px;">KB</div>
<div class="t" style="left:573.29px;top:385.84px;font-size:12px;color:#dddddd;font-weight:400;letter-spacing:-0.758px;">170</div>
<svg class="r" style="left:21px;top:414px;" width="12" height="16" viewBox="0 0 12 16"><path d="M0.5 0.5 H8.3 L11.5 3.7 V15.5 H0.5 Z" fill="#fafafa" stroke="#858585" stroke-width="1"/><path d="M8.3 0.6 V3.7 H11.4" fill="#f2f2f2" stroke="#858585" stroke-width="0.9"/><circle cx="4.9" cy="6.9" r="2.6" fill="#a3acb8"/><circle cx="4.9" cy="6.9" r="1" fill="#dfe3e8"/><circle cx="7.6" cy="10.5" r="1.75" fill="none" stroke="#505963" stroke-width="1" stroke-dasharray="0.9 0.65"/><circle cx="7.6" cy="10.5" r="1.4" fill="#505963"/><circle cx="7.6" cy="10.5" r="0.6" fill="#ffffff"/></svg>
<div class="t" style="left:39.10px;top:416.84px;font-size:12px;color:#ffffff;font-weight:400;letter-spacing:0.334px;">Nettify.dll</div>
<div class="t" style="left:279.30px;top:416.84px;font-size:12px;color:#dddddd;font-weight:400;letter-spacing:-0.196px;">2/29/2024 11:39 AM</div>
<div class="t" style="left:423.30px;top:416.84px;font-size:12px;color:#dddddd;font-weight:400;letter-spacing:-0.011px;">Application exten...</div>
<div class="t" style="left:595.60px;top:416.84px;font-size:12px;color:#dddddd;font-weight:400;letter-spacing:-2.510px;">KB</div>
<div class="t" style="left:579.21px;top:416.84px;font-size:12px;color:#dddddd;font-weight:400;letter-spacing:-0.758px;">44</div>
<svg class="r" style="left:21px;top:445px;" width="12" height="16" viewBox="0 0 12 16"><path d="M0.5 0.5 H8.3 L11.5 3.7 V15.5 H0.5 Z" fill="#fafafa" stroke="#858585" stroke-width="1"/><path d="M8.3 0.6 V3.7 H11.4" fill="#f2f2f2" stroke="#858585" stroke-width="0.9"/><circle cx="4.9" cy="6.9" r="2.6" fill="#a3acb8"/><circle cx="4.9" cy="6.9" r="1" fill="#dfe3e8"/><circle cx="7.6" cy="10.5" r="1.75" fill="none" stroke="#505963" stroke-width="1" stroke-dasharray="0.9 0.65"/><circle cx="7.6" cy="10.5" r="1.4" fill="#505963"/><circle cx="7.6" cy="10.5" r="0.6" fill="#ffffff"/></svg>
<div class="t" style="left:39.10px;top:447.84px;font-size:12px;color:#ffffff;font-weight:400;letter-spacing:-0.025px;">Newtonsoft.Json.dll</div>
<div class="t" style="left:279.30px;top:447.84px;font-size:12px;color:#dddddd;font-weight:400;letter-spacing:-0.196px;">2/29/2024 11:39 AM</div>
<div class="t" style="left:423.30px;top:447.84px;font-size:12px;color:#dddddd;font-weight:400;letter-spacing:-0.011px;">Application exten...</div>
<div class="t" style="left:595.60px;top:447.84px;font-size:12px;color:#dddddd;font-weight:400;letter-spacing:-2.510px;">KB</div>
<div class="t" style="left:573.29px;top:447.84px;font-size:12px;color:#dddddd;font-weight:400;letter-spacing:-0.758px;">696</div>
<svg class="r" style="left:21px;top:476px;" width="12" height="16" viewBox="0 0 12 16"><path d="M0.5 0.5 H8.3 L11.5 3.7 V15.5 H0.5 Z" fill="#fafafa" stroke="#858585" stroke-width="1"/><path d="M8.3 0.6 V3.7 H11.4" fill="#f2f2f2" stroke="#858585" stroke-width="0.9"/><circle cx="4.9" cy="6.9" r="2.6" fill="#a3acb8"/><circle cx="4.9" cy="6.9" r="1" fill="#dfe3e8"/><circle cx="7.6" cy="10.5" r="1.75" fill="none" stroke="#505963" stroke-width="1" stroke-dasharray="0.9 0.65"/><circle cx="7.6" cy="10.5" r="1.4" fill="#505963"/><circle cx="7.6" cy="10.5" r="0.6" fill="#ffffff"/></svg>
<div class="t" style="left:39.10px;top:478.84px;font-size:12px;color:#ffffff;font-weight:400;letter-spacing:-0.025px;">Newtonsoft.Json.Schema.dll</div>
<div class="t" style="left:279.30px;top:478.84px;font-size:12px;color:#dddddd;font-weight:400;letter-spacing:-0.196px;">2/29/2024 11:39 AM</div>
<div class="t" style="left:423.30px;top:478.84px;font-size:12px;color:#dddddd;font-weight:400;letter-spacing:-0.011px;">Application exten...</div>
<div class="t" style="left:595.60px;top:478.84px;font-size:12px;color:#dddddd;font-weight:400;letter-spacing:-2.510px;">KB</div>
<div class="t" style="left:573.29px;top:478.84px;font-size:12px;color:#dddddd;font-weight:400;letter-spacing:-0.758px;">266</div>
</div>
<div class="r" style="left:0px;top:652px;width:986px;height:24px;background:#1e1e1e;"></div>
<div class="t" style="left:14.90px;top:657.84px;font-size:12px;color:#e6e6e6;font-weight:400;letter-spacing:-0.179px;">41 items</div>
<div class="r" style="left:69px;top:657px;width:1px;height:12px;background:#d0d0d0;"></div>
<div class="t" style="left:80.90px;top:657.84px;font-size:12px;color:#e6e6e6;font-weight:400;letter-spacing:-0.201px;">1 item selected</div>
<div class="r" style="left:169px;top:657px;width:1px;height:12px;background:#d0d0d0;"></div>
<div class="t" style="left:180.00px;top:657.84px;font-size:12px;color:#e6e6e6;font-weight:400;letter-spacing:-0.670px;">State:</div>
<svg class="r" style="left:211px;top:654px;" width="17" height="17" viewBox="0 0 17 17"><defs><linearGradient id="sg" x1="0" y1="0" x2="1" y2="1"><stop offset="0" stop-color="#6ede5e"/><stop offset="1" stop-color="#2ea83a"/></linearGradient></defs><path d="M7.2 3.2 H1.8 V15.3 H13.6 V10.2" stroke="#35b845" stroke-width="1.2" fill="none"/><path d="M3.4 12.6 Q3.8 6.9 10.4 6.4 V2.2 L15.9 7.3 L10.4 12.2 V9.3 Q6.2 9.2 3.4 12.6 Z" fill="url(#sg)"/></svg>
<div class="t" style="left:229.40px;top:657.84px;font-size:12px;color:#e6e6e6;font-weight:400;letter-spacing:-0.680px;">Shared</div>
<div class="r" style="left:273px;top:657px;width:1px;height:12px;background:#d0d0d0;"></div>
<div class="r" style="left:937px;top:652px;width:22px;height:23px;background:#6e6e6e;border:1px solid #7c7c7c"></div>
<svg class="r" style="left:941px;top:656px;" width="16" height="16" viewBox="0 0 16 16"><rect x="0.5" y="0.5" width="15" height="15" rx="2" fill="#d6d6d6" stroke="#bdbdbd"/><path d="M2.5 3.5 H13.5 M2.5 6.5 H13.5 M2.5 9.5 H13.5 M2.5 12.5 H13.5" stroke="#111" stroke-width="1.1"/></svg>
<svg class="r" style="left:962px;top:655px;" width="16" height="16" viewBox="0 0 16 16"><rect x="0.5" y="0.5" width="15" height="15" rx="2" fill="#bdbdbd" stroke="#a0a0a0"/><rect x="2.3" y="2.3" width="11.4" height="9" fill="#fff" stroke="#111" stroke-width="1.1"/><path d="M2.5 13.6 H13.5" stroke="#222" stroke-width="1"/></svg>
</div>
<div class="brd"></div>
</body></html>
